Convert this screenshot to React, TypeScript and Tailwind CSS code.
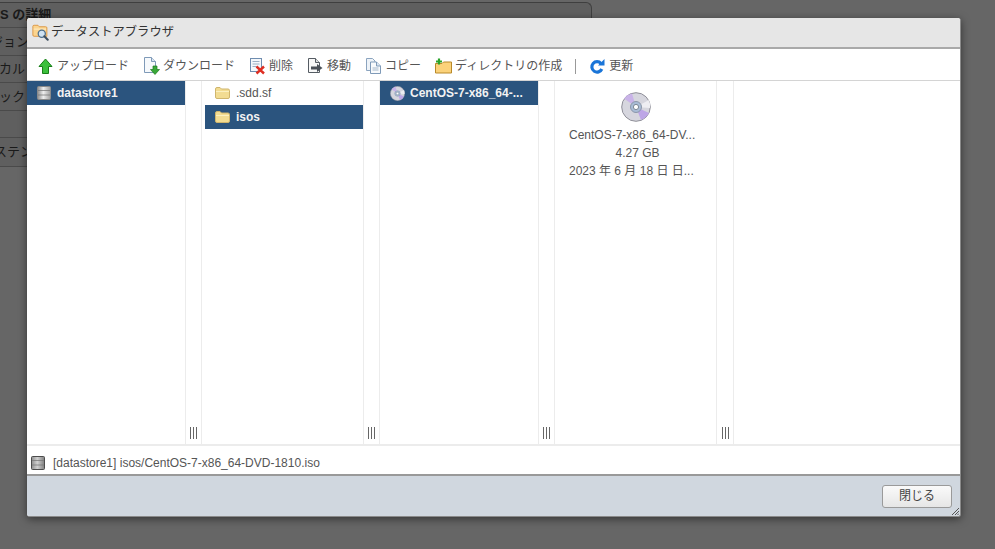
import type { ReactNode } from 'react'

const FONT = 'font-["Liberation_Sans","Noto_Sans_CJK_JP",sans-serif]'

function FolderSearchIcon() {
  return (
    <svg width="17" height="17" viewBox="0 0 20 20" aria-hidden>
      <path d="M1 5 L1 2.8 Q1 1.5 2.5 1.5 H7 L8.5 3.2 H16 Q17.5 3.2 17.5 4.5 V14.5 H2.5 Q1 14.5 1 13 Z" fill="#fbd48e" stroke="#d9903a" />
      <path d="M2 6 H16.5" stroke="#fff0cf" />
      <circle cx="11.5" cy="11.5" r="4.2" fill="#cfe3f3" stroke="#4d6f8c" strokeWidth="1.5" />
      <path d="M14.5 14.5 L18.5 18.5" stroke="#3d4f60" strokeWidth="2.4" strokeLinecap="round" />
    </svg>
  )
}

function UploadIcon() {
  return (
    <svg width="15" height="17" viewBox="0 0 15 17" aria-hidden>
      <path d="M7.5 1 L14 8.5 H10.5 V15.5 H4.5 V8.5 H1 Z" fill="#3cc03c" stroke="#187f18" strokeLinejoin="round" />
    </svg>
  )
}

function DownloadIcon() {
  return (
    <svg width="17" height="18" viewBox="0 0 17 18" aria-hidden>
      <path d="M1.5 .5 H8.5 L12.5 4.5 V15.5 H1.5 Z" fill="#f6f9fc" stroke="#7f9ab8" />
      <path d="M8.5 .5 V4.5 H12.5" fill="#dbe6f1" stroke="#7f9ab8" />
      <path d="M10 9 H14 V12.5 H16.5 L12 17.5 L7.5 12.5 H10 Z" fill="#38a838" stroke="#1b7a1b" strokeWidth=".7" />
    </svg>
  )
}

function DeleteIcon() {
  return (
    <svg width="17" height="18" viewBox="0 0 17 18" aria-hidden>
      <rect x="1.5" y="1.5" width="11" height="13" fill="#f5f8fb" stroke="#6f8db0" />
      <path d="M3.5 4.5 H10.5 M3.5 7 H10.5 M3.5 9.5 H8" stroke="#9db0c4" />
      <path d="M7.5 9.5 L15 16.5 M15 9.5 L7.5 16.5" stroke="#de2e22" strokeWidth="2.4" />
    </svg>
  )
}

function MoveIcon() {
  return (
    <svg width="17" height="18" viewBox="0 0 17 18" aria-hidden>
      <path d="M1.5 1.5 H8.5 L12.5 5.5 V15.5 H1.5 Z" fill="#f8f8f8" stroke="#555c63" />
      <path d="M8.5 1.5 V5.5 H12.5" fill="#ddd" stroke="#555c63" />
      <path d="M4 9.5 H10 V7 L15.5 11 L10 15 V12.5 H4 Z" fill="#4a5057" />
    </svg>
  )
}

function CopyIcon() {
  return (
    <svg width="17" height="18" viewBox="0 0 17 18" aria-hidden>
      <path d="M1.5 1.5 H7.5 L10 4 V13.5 H1.5 Z" fill="#eef3f8" stroke="#8ba4bf" />
      <path d="M5.5 5 H11.5 L15.5 9 V16.5 H5.5 Z" fill="#f8fafc" stroke="#7f9ab8" />
      <path d="M11.5 5 V9 H15.5" fill="#dbe6f1" stroke="#7f9ab8" />
      <path d="M7.5 11 H13.5 M7.5 13 H13.5" stroke="#a4b7ca" />
    </svg>
  )
}

function NewFolderIcon() {
  return (
    <svg width="17" height="16" viewBox="0 0 17 16" aria-hidden>
      <path d="M.5 5.5 H7 L8.5 4 H16.5 V15 H.5 Z" fill="#fbd27a" stroke="#b98a2a" />
      <path d="M4 .5 V6.5 M1 3.5 H7" stroke="#2aa32a" strokeWidth="2.2" />
    </svg>
  )
}

function RefreshIcon() {
  return (
    <svg width="17" height="17" viewBox="0 0 17 17" aria-hidden>
      <path d="M12 5.5 A5.2 5.2 0 1 0 12.8 11" fill="none" stroke="#1a75d8" strokeWidth="3.2" />
      <path d="M9 7.5 H15.5 V1 Z" fill="#1a75d8" />
    </svg>
  )
}

function DatastoreIcon({ dim }: { dim?: boolean }) {
  const gradientId = dim ? 'store-dim' : 'store-bright'
  return (
    <svg width="14" height="14" viewBox="0 0 14 14" aria-hidden>
      <defs>
        <linearGradient id={gradientId}>
          <stop offset="0" stopColor={dim ? '#8e8e8e' : '#8d8d8d'} />
          <stop offset=".45" stopColor={dim ? '#d0d0d0' : '#eeeeee'} />
          <stop offset="1" stopColor={dim ? '#7f7f7f' : '#a0a0a0'} />
        </linearGradient>
      </defs>
      <rect x=".5" y=".5" width="13" height="13" rx="1" fill={`url(#${gradientId})`} stroke={dim ? '#4c4c4c' : '#8a8a8a'} />
      <path d="M1 4.5 H13 M1 9 H13" stroke="#777" strokeOpacity=".75" />
    </svg>
  )
}

function FolderIcon() {
  return (
    <svg width="15" height="12" viewBox="0 0 15 12" aria-hidden>
      <path d="M.5 2 Q.5 .5 2 .5 H5 L6.5 2 H13 Q14.5 2 14.5 3.5 V10 Q14.5 11.5 13 11.5 H2 Q.5 11.5 .5 10 Z" fill="#f2dc92" stroke="#cfb56c" />
      <path d="M1 4.5 H14" stroke="#fbf0c0" />
    </svg>
  )
}

function DiscIcon({ size }: { size: number }) {
  return (
    <svg width={size} height={size} viewBox="0 0 30 30" aria-hidden>
      <circle cx="15" cy="15" r="14.3" fill="#d6d6de" stroke="#8f8f98" />
      <path d="M15 15 L3 6.5 A15 15 0 0 1 11 1.5 Z" fill="#c9b3e8" />
      <path d="M15 15 L28 21 A15 15 0 0 1 20 28 Z" fill="#bda6e6" />
      <path d="M15 15 L28 8 A15 15 0 0 1 29 16 Z" fill="#eeeef2" />
      <circle cx="15" cy="15" r="5.5" fill="#a9bcd6" stroke="#8b97aa" />
      <circle cx="15" cy="15" r="2.6" fill="#ffffff" stroke="#7d8794" />
    </svg>
  )
}

function ToolButton({ icon, label, className }: { icon: ReactNode; label: string; className?: string }) {
  return (
    <div className={`flex items-center gap-[3px] text-xs text-[#555] ${className ?? ''}`}>
      <span className="flex w-[17px] justify-center">{icon}</span>
      <span>{label}</span>
    </div>
  )
}

function ListRow({ icon, label, selected }: { icon: ReactNode; label: string; selected?: boolean }) {
  return (
    <div
      className={`flex h-6 items-center gap-[6px] px-[10px] text-xs ${
        selected ? 'bg-[#2b547e] font-bold text-[#f2f2f2]' : 'text-[#555]'
      }`}
    >
      {icon}
      <span>{label}</span>
    </div>
  )
}

function Splitter({ width }: { width: string }) {
  return (
    <div className={`flex shrink-0 flex-col items-center justify-end border-x border-[#ececec] pb-[5px] ${width}`}>
      <div className="flex gap-[2px]">
        <span className="h-3 w-px bg-[#666]" />
        <span className="h-3 w-px bg-[#666]" />
        <span className="h-3 w-px bg-[#666]" />
      </div>
    </div>
  )
}

function BackgroundRow({ label, height, offset, bold }: { label: string; height: string; offset?: string; bold?: boolean }) {
  return (
    <div className={`flex items-center overflow-hidden border-b border-[#4a4a4a] text-[13px] whitespace-nowrap text-[#1a1a1a] ${height} ${bold ? 'font-bold' : ''}`}>
      <span className={offset}>{label}</span>
    </div>
  )
}

export default function App() {
  return (
    <div className={`relative h-[549px] w-[995px] overflow-hidden bg-[#666666] ${FONT}`}>
      {/* page behind the dimmed overlay */}
      <div className="mt-[2px] h-[165px] w-[592px] rounded-tr-md border-t border-r border-[#3f3f3f] bg-[#5f5f5f]">
        <BackgroundRow label="S の詳細" height="h-[25px]" bold />
        <BackgroundRow label="ジョン" height="h-[28px]" offset="-ml-[10px]" />
        <BackgroundRow label="カル" height="h-[27px]" offset="-ml-[1px]" />
        <BackgroundRow label="ック サ" height="h-[28px]" offset="-ml-[1px]" />
        <BackgroundRow label="" height="h-[27px]" />
        <BackgroundRow label="ステン" height="h-[29px]" offset="-ml-[6px]" />
      </div>

      {/* datastore browser dialog */}
      <div className="absolute top-[18px] left-[27px] flex h-[499px] w-[934px] flex-col overflow-hidden rounded-[3px] border-r border-b border-[#8a8a8a] bg-white shadow-[0_2px_8px_rgba(0,0,0,0.5)]">
        <div className="flex h-[31px] shrink-0 items-center gap-[2px] border-b-2 border-[#a9a9a9] bg-[#e6e6e6] px-[5px] text-[12.3px] text-[#333]">
          <FolderSearchIcon />
          <span className="whitespace-nowrap">データストアブラウザ</span>
        </div>

        <div className="flex h-[32px] shrink-0 items-center gap-[14px] border-b border-[#d4d4d4] pt-[3px] pl-[10px]">
          <ToolButton icon={<UploadIcon />} label="アップロード" />
          <ToolButton icon={<DownloadIcon />} label="ダウンロード" />
          <ToolButton icon={<DeleteIcon />} label="削除" />
          <ToolButton icon={<MoveIcon />} label="移動" />
          <ToolButton icon={<CopyIcon />} label="コピー" />
          <ToolButton icon={<NewFolderIcon />} label="ディレクトリの作成" />
          <div className="-ml-px h-[15px] w-px bg-[#999]" />
          <ToolButton className="-ml-px" icon={<RefreshIcon />} label="更新" />
        </div>

        <div className="flex min-h-0 flex-1 border-b-2 border-[#ececec]">
          <div className="w-[158px] shrink-0">
            <ListRow selected icon={<DatastoreIcon />} label="datastore1" />
          </div>
          <Splitter width="w-[17px]" />
          <div className="w-[161px] shrink-0 pl-[3px]">
            <ListRow icon={<FolderIcon />} label=".sdd.sf" />
            <ListRow selected icon={<FolderIcon />} label="isos" />
          </div>
          <Splitter width="w-[17px]" />
          <div className="w-[158px] shrink-0">
            <ListRow selected icon={<span className="-mr-px flex"><DiscIcon size={15} /></span>} label="CentOS-7-x86_64-..." />
          </div>
          <Splitter width="w-[17px]" />
          <div className="flex w-[161px] shrink-0 flex-col pt-[11px] text-xs leading-[18px] text-[#555]">
            <div className="ml-[14px] w-[137px] self-start">
              <div className="flex justify-center pr-[3px]">
                <DiscIcon size={30} />
              </div>
              <div className="mt-[4px] whitespace-nowrap">CentOS-7-x86_64-DV...</div>
              <div className="text-center">4.27 GB</div>
              <div className="whitespace-nowrap">2023 年 6 月 18 日 日...</div>
            </div>
          </div>
          <Splitter width="w-[18px]" />
          <div className="flex-1" />
        </div>

        <div className="flex h-[30px] shrink-0 items-center gap-[8px] border-b-2 border-[#999] px-[4px] pt-[5px] text-xs text-[#555]">
          <DatastoreIcon dim />
          <span>[datastore1] isos/CentOS-7-x86_64-DVD-1810.iso</span>
        </div>

        <div className="relative flex h-[40px] shrink-0 items-center justify-end bg-[#d0d7df] pr-[8px]">
          <button
            type="button"
            className="h-[23px] w-[70px] rounded-[3px] border border-[#9a9a9a] bg-gradient-to-b from-[#fafafa] to-[#e6e6e6] text-xs text-[#444]"
          >
            閉じる
          </button>
          <svg className="absolute right-[1px] bottom-[1px]" width="7" height="7" viewBox="0 0 7 7" aria-hidden>
            <path d="M0 7 L7 0 M3 7 L7 3 M5.5 7 L7 5.5" stroke="#555" />
          </svg>
        </div>
      </div>
    </div>
  )
}
